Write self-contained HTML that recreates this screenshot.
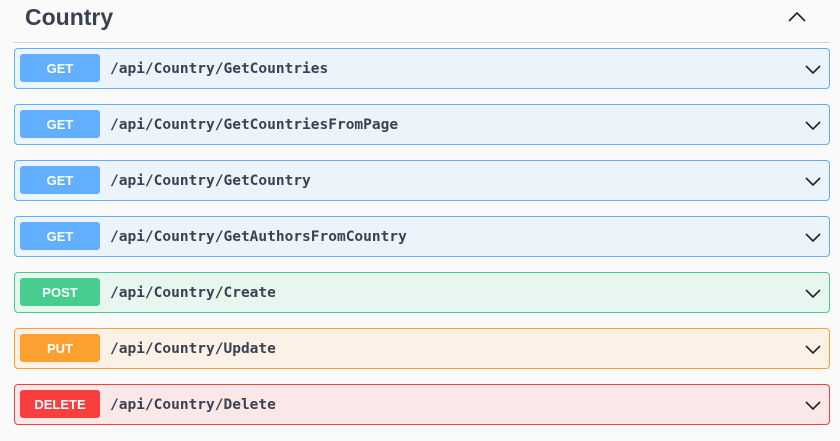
<!DOCTYPE html><html><head><style>
body{margin:0;background:#fafafa;width:840px;height:441px;overflow:hidden;font-family:"Liberation Sans",sans-serif}
.h{position:absolute;left:14px;top:0;width:816px;height:42px;border-bottom:1px solid #d0d0d0}
.h span{position:absolute;left:11px;top:4px;font-size:23px;font-weight:bold;color:#3b4151}
.h svg{position:absolute;right:24px;top:11px}
.op{position:absolute;left:14px;width:814px;height:39px;border:1px solid;border-radius:4px}
.b{position:absolute;left:5px;top:5px;width:80px;height:28px;border-radius:3px;color:#fff;font-weight:bold;font-size:13px;text-align:center;line-height:29px}
.p{position:absolute;left:95px;top:12px;font-family:"DejaVu Sans Mono","Liberation Mono",monospace;font-weight:bold;font-size:14.5px;color:#3b4151}
.op svg{position:absolute;right:8px;top:14px}
.g{background:#ebf3fb;border-color:#61affe}.g .b{background:#61affe}
.po{background:#e8f6f0;border-color:#49cc90}.po .b{background:#49cc90}
.pu{background:#fbf1e6;border-color:#fca130}.pu .b{background:#fca130}
.d{background:#fae7e7;border-color:#f93e3e}.d .b{background:#f93e3e}
</style></head><body>
<div class="h"><span>Country</span><svg width="18" height="12" viewBox="0 0 18 12"><path d="M1 10L9 2L17 10" fill="none" stroke="#222" stroke-width="1.6"/></svg></div>
<div class="op g" style="top:48px"><div class="b">GET</div><div class="p">/api/Country/GetCountries</div><svg width="16" height="12" viewBox="0 0 16 12"><path d="M1 3L8 10L15 3" fill="none" stroke="#222" stroke-width="1.6"/></svg></div>
<div class="op g" style="top:104px"><div class="b">GET</div><div class="p">/api/Country/GetCountriesFromPage</div><svg width="16" height="12" viewBox="0 0 16 12"><path d="M1 3L8 10L15 3" fill="none" stroke="#222" stroke-width="1.6"/></svg></div>
<div class="op g" style="top:160px"><div class="b">GET</div><div class="p">/api/Country/GetCountry</div><svg width="16" height="12" viewBox="0 0 16 12"><path d="M1 3L8 10L15 3" fill="none" stroke="#222" stroke-width="1.6"/></svg></div>
<div class="op g" style="top:216px"><div class="b">GET</div><div class="p">/api/Country/GetAuthorsFromCountry</div><svg width="16" height="12" viewBox="0 0 16 12"><path d="M1 3L8 10L15 3" fill="none" stroke="#222" stroke-width="1.6"/></svg></div>
<div class="op po" style="top:272px"><div class="b">POST</div><div class="p">/api/Country/Create</div><svg width="16" height="12" viewBox="0 0 16 12"><path d="M1 3L8 10L15 3" fill="none" stroke="#222" stroke-width="1.6"/></svg></div>
<div class="op pu" style="top:328px"><div class="b">PUT</div><div class="p">/api/Country/Update</div><svg width="16" height="12" viewBox="0 0 16 12"><path d="M1 3L8 10L15 3" fill="none" stroke="#222" stroke-width="1.6"/></svg></div>
<div class="op d" style="top:384px"><div class="b">DELETE</div><div class="p">/api/Country/Delete</div><svg width="16" height="12" viewBox="0 0 16 12"><path d="M1 3L8 10L15 3" fill="none" stroke="#222" stroke-width="1.6"/></svg></div>
</body></html>
